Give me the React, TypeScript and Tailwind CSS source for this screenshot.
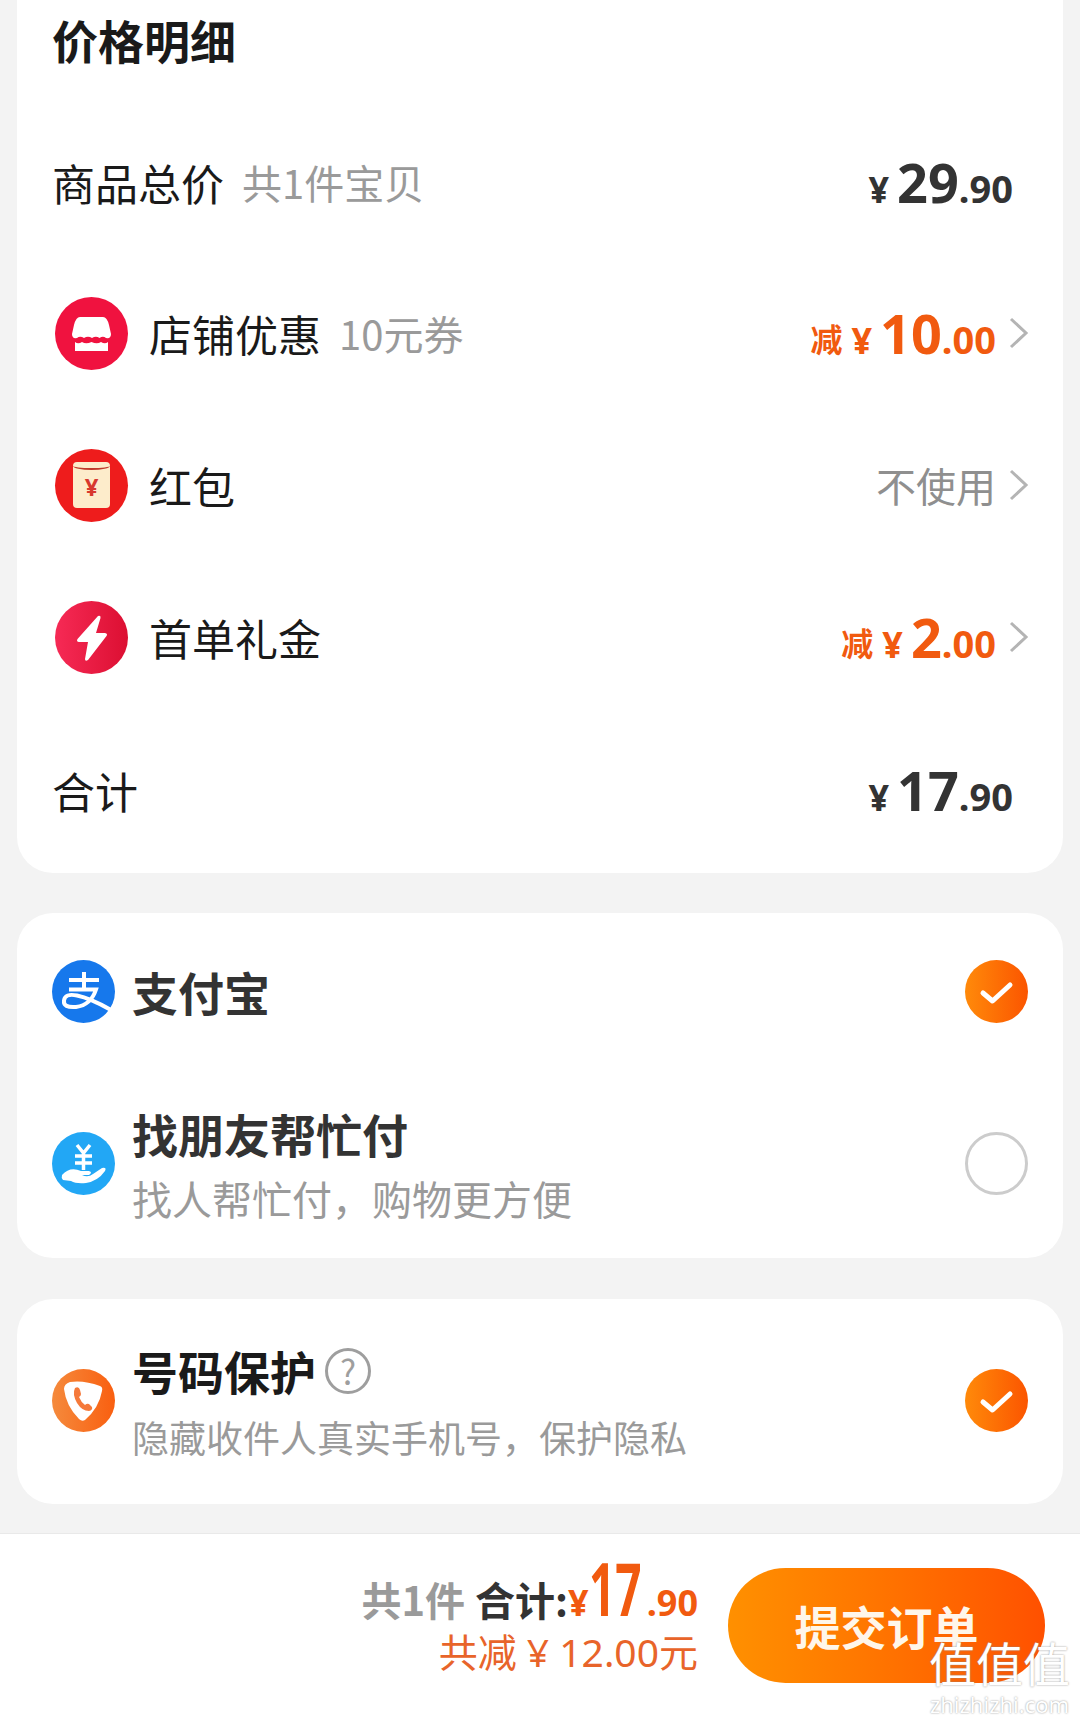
const cjk = "font-['Noto_Sans_CJK_SC',sans-serif]";

function Price({ big, cents, accent }: { big: string; cents: string; accent?: boolean }) {
  return (
    <span className={`flex items-baseline font-['Noto_Sans','Noto_Sans_CJK_SC',sans-serif] font-bold leading-none ${accent ? "text-[#f15a0f]" : "text-[#333333]"}`}>
      {accent && <span className={`${cjk} text-[32px] mr-[9px] relative -top-[2px]`}>减</span>}
      <span className="text-[36px] mr-[8px]">¥</span>
      <span className="text-[54px]">{big}</span>
      <span className="text-[38px]">.{cents}</span>
    </span>
  );
}

function Chevron() {
  return (
    <svg width="20" height="32" viewBox="0 0 20 32" fill="none" className="ml-[13px] mr-[1px] mb-[1px]">
      <path d="M2 2 L17 16 L2 30" stroke="#b4b4b4" strokeWidth="3" />
    </svg>
  );
}

function StoreIcon() {
  return (
    <svg width="73" height="73" viewBox="0 0 73 73">
      <circle cx="36.5" cy="36.5" r="36.5" fill="#f0123f" />
      <path d="M25 20 H48 Q52 20 54 28 L56 37 Q56 42 51 41 Q48 38.500 44.500 41 Q41 38.500 37 41 Q33 38.500 29 41 Q25 38.500 22 41 Q17 42 17 37 L19 28 Q21 20 25 20 Z" fill="#fff" />
      <path d="M20 45 Q23 47.500 27 45 Q31 47.500 36.500 45 Q42 47.500 46 45 Q50 47.500 53 45 V54 H20 Z" fill="#fff" />
    </svg>
  );
}

function RedPacketIcon() {
  return (
    <div className="w-[73px] h-[73px] rounded-full bg-[#ee1c1c] flex items-center justify-center">
      <div className="w-[37px] h-[46px] rounded-[4px] bg-[#fdeccb] overflow-hidden flex flex-col items-center">
        <div className="w-[37px] h-[8px] rounded-b-[50%] border-b-2 border-[#c0392b]" />
        <span className="font-['Noto_Sans',sans-serif] font-bold text-[#d8382e] text-[24px] leading-none mt-[5px]">¥</span>
      </div>
    </div>
  );
}

function BoltIcon() {
  return (
    <svg width="73" height="73" viewBox="0 0 73 73">
      <defs>
        <linearGradient id="bolt" x1="0" x2="1" y1="0" y2="0">
          <stop offset="0" stopColor="#f62a55" />
          <stop offset="1" stopColor="#dc0f32" />
        </linearGradient>
      </defs>
      <circle cx="36.5" cy="36.5" r="36.5" fill="url(#bolt)" />
      <path d="M43 15 Q46 14 45.500 17 L41 32 H50 Q53 32.500 51.500 35 L33 59 Q30 61 30 58 L33 41 H24 Q21 40.500 22.500 38 Z" fill="#fff" />
    </svg>
  );
}

function AlipayIcon() {
  return (
    <svg width="63" height="63" viewBox="0 0 63 63">
      <circle cx="31.5" cy="31.5" r="31.5" fill="#1678ec" />
      <path d="M17 20 H47 M32 12 V29 M17 29.500 H44 Q39 45 24 47 Q11 48 12 40.500 Q13 33 25 35.500 Q38 38 59 50" fill="none" stroke="#fff" strokeWidth="4" />
    </svg>
  );
}

function HandIcon() {
  return (
    <svg width="63" height="63" viewBox="0 0 63 63">
      <circle cx="31.5" cy="31.5" r="31.5" fill="#22a7f5" />
      <path d="M25 13 L31.500 21 L38 13 M23 24 H40 M23 31 H40 M31.500 21 V38" fill="none" stroke="#fff" strokeWidth="3.500" />
      <path d="M10 43 Q18 34 29 39 H37 Q41 40 37 43 H30 Q36 46 41 42 L50 36 Q55 35 53 39 Q46 49 34 51 Q24 52 19 49 L11 48 Q9 46 10 43 Z" fill="#fff" />
    </svg>
  );
}

function ShieldIcon() {
  return (
    <svg width="63" height="63" viewBox="0 0 63 63">
      <defs>
        <linearGradient id="shield" x1="0" x2="1" y1="0" y2="0">
          <stop offset="0" stopColor="#f58a3c" />
          <stop offset="1" stopColor="#f95f10" />
        </linearGradient>
      </defs>
      <circle cx="31.5" cy="31.5" r="31.5" fill="url(#shield)" />
      <path d="M18 13 Q32 11 48 17 Q51 18 50 22 Q47 39 33 51 Q30 53 27 50 Q14 37 12 20 Q12 15 18 13 Z" fill="#fff" />
      <path d="M23 19 Q27 17 28 21 L29 25 Q29 27 27 28 Q29 33 33 36 Q35 34 37 35 L40 38 Q41 41 37 42 Q30 42 25 34 Q20 25 23 19 Z" fill="#f5793a" />
    </svg>
  );
}

function Check() {
  return (
    <svg width="63" height="63" viewBox="0 0 63 63" className="shrink-0">
      <defs>
        <linearGradient id="check" x1="0" x2="1" y1="0" y2="0">
          <stop offset="0" stopColor="#ff8a0a" />
          <stop offset="1" stopColor="#fb5500" />
        </linearGradient>
      </defs>
      <circle cx="31.5" cy="31.5" r="31.5" fill="url(#check)" />
      <path d="M18 33 L27.500 41 L45 25" fill="none" stroke="#fff" strokeWidth="5" strokeLinecap="round" strokeLinejoin="round" />
    </svg>
  );
}

function Radio() {
  return <div className="w-[63px] h-[63px] shrink-0 rounded-full border-[3px] border-[#cccccc]" />;
}

function FeeRow({ icon, label, sub, className, children }: { icon?: React.ReactNode; label: string; sub?: string; className: string; children: React.ReactNode }) {
  return (
    <div className={`flex items-center justify-between ${className}`}>
      <div className="flex items-center">
        {icon && <div className="mr-[21px] ml-[3px]">{icon}</div>}
        <span className="text-[43px] leading-none text-[#1a1a1a]">{label}</span>
        {sub && <span className="ml-[18px] text-[40px] leading-none text-[#9a9a9a]">{sub}</span>}
      </div>
      {children}
    </div>
  );
}

export default function App() {
  return (
    <div className={`relative w-[1080px] h-[1719px] overflow-hidden bg-[#f3f3f3] flex flex-col ${cjk}`}>
      <section className="mx-[17px] h-[873px] rounded-b-[36px] bg-white pl-[35px] pr-[33px] flex flex-col">
        <h2 className="h-[78px] flex items-center text-[46px] font-bold leading-none text-[#1a1a1a]">价格明细</h2>
        <FeeRow label="商品总价" sub="共1件宝贝" className="h-[152px] mt-[28px] pr-[17px]">
          <Price big="29" cents="90" />
        </FeeRow>
        <FeeRow icon={<StoreIcon />} label="店铺优惠" sub="10元券" className="h-[152px] -mt-[1px]">
          <div className="flex items-center">
            <Price big="10" cents="00" accent />
            <Chevron />
          </div>
        </FeeRow>
        <FeeRow icon={<RedPacketIcon />} label="红包" className="h-[152px]">
          <div className="flex items-center">
            <span className="text-[40px] leading-none text-[#8f8f8f]">不使用</span>
            <Chevron />
          </div>
        </FeeRow>
        <FeeRow icon={<BoltIcon />} label="首单礼金" className="h-[152px]">
          <div className="flex items-center">
            <Price big="2" cents="00" accent />
            <Chevron />
          </div>
        </FeeRow>
        <FeeRow label="合计" className="h-[152px] mt-[1px] pr-[17px]">
          <Price big="17" cents="90" />
        </FeeRow>
      </section>

      <section className="mx-[17px] mt-[40px] h-[345px] rounded-[36px] bg-white px-[35px] flex flex-col">
        <div className="flex items-center justify-between h-[156px]">
          <div className="flex items-center gap-[17px]">
            <AlipayIcon />
            <span className="text-[46px] font-bold leading-none text-[#333333]">支付宝</span>
          </div>
          <Check />
        </div>
        <div className="flex items-center justify-between h-[189px]">
          <div className="flex items-center gap-[17px]">
            <HandIcon />
            <div className="flex flex-col gap-[22px]">
              <span className="text-[46px] font-bold leading-none text-[#333333]">找朋友帮忙付</span>
              <span className="text-[40px] leading-none text-[#9a9a9a]">找人帮忙付，购物更方便</span>
            </div>
          </div>
          <Radio />
        </div>
      </section>

      <section className="mx-[17px] mt-[41px] h-[205px] rounded-[36px] bg-white px-[35px] pb-[2px] flex items-center justify-between">
        <div className="flex items-center gap-[17px]">
          <ShieldIcon />
          <div className="flex flex-col gap-[25px]">
            <div className="flex items-center gap-[9px]">
              <span className="text-[46px] font-bold leading-none text-[#1a1a1a]">号码保护</span>
              <div className="w-[46px] h-[46px] mt-[2px] rounded-full border-[3px] border-[#9e9e9e] flex items-center justify-center text-[34px] leading-none text-[#9e9e9e]">?</div>
            </div>
            <span className="text-[37px] leading-none text-[#9a9a9a]">隐藏收件人真实手机号，保护隐私</span>
          </div>
        </div>
        <Check />
      </section>

      <footer className="mt-[29px] flex-1 bg-white border-t border-[#e9e9e9] flex items-center justify-end pr-[35px] pb-[3px] gap-[30px]">
        <div className="flex flex-col items-end -mt-[29px]">
          <div className="flex items-baseline font-bold leading-none">
            <span className="text-[40px] text-[#9a9a9a]">共1件</span>
            <span className="text-[40px] text-[#333333] ml-[10px]">合计:</span>
            <span className="text-[#f15a0f] font-['Noto_Sans',sans-serif] text-[36px]">¥</span>
            <span className="inline-block w-[53px] origin-left scale-x-[0.62] text-[#f15a0f] font-['Noto_Sans',sans-serif] text-[74px]">17</span>
            <span className="text-[#f15a0f] font-['Noto_Sans',sans-serif] text-[36px] ml-[5px]">.90</span>
          </div>
          <span className="mt-[7px] text-[39px] leading-none text-[#e8642a] font-['Noto_Sans','Noto_Sans_CJK_SC',sans-serif]">共减 ¥ 12.00元</span>
        </div>
        <button className="w-[317px] h-[115px] rounded-full bg-gradient-to-r from-[#ff9000] to-[#ff5000] text-[46px] font-bold text-[#fff6ea]">提交订单</button>
      </footer>

      <div className="absolute left-[929px] top-[1638px] flex flex-col items-center text-white [text-shadow:0_0_2px_#8a8a8a]">
        <span className="text-[47px] leading-none">值值值</span>
        <span className="text-[22px] leading-none mt-[8px] font-['Noto_Sans',sans-serif]">zhizhizhi.com</span>
      </div>
    </div>
  );
}
